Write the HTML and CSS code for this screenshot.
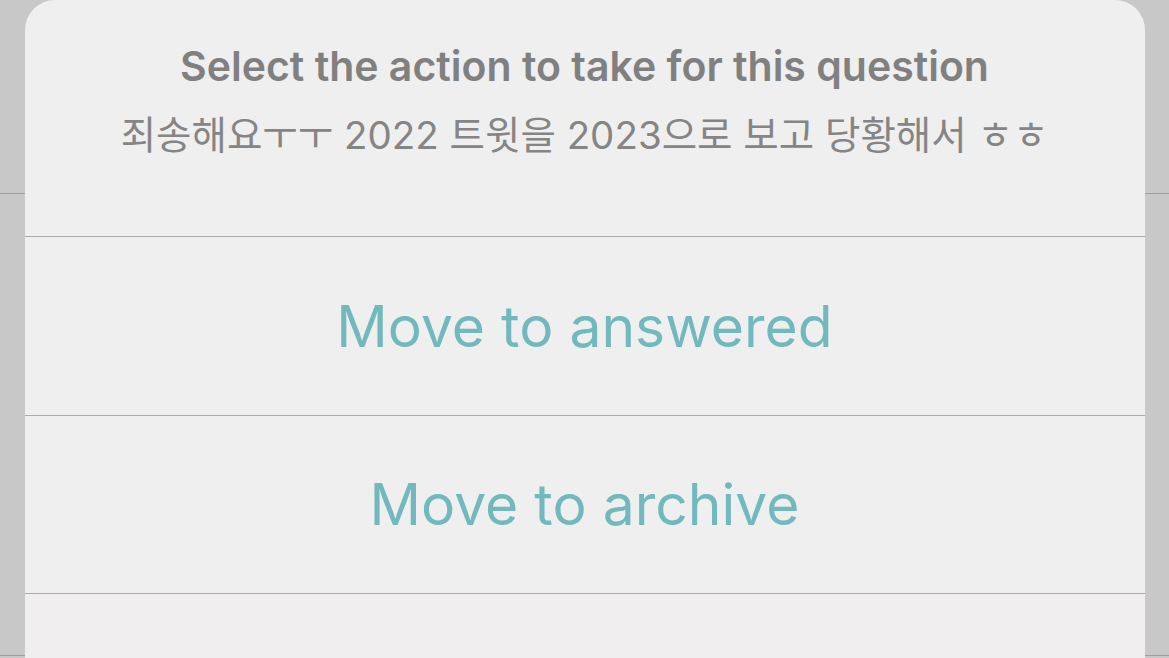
FILE: index.html
```html
<!DOCTYPE html>
<html lang="en">
<head>
<meta charset="utf-8">
<title>Action sheet</title>
<link rel="stylesheet" href="styles.css">
</head>
<body>
<div class="backdrop">
  <div class="bg-line top"></div>
  <div class="bg-line bottom"></div>
  <div class="sheet">
    <div class="header">
      <div class="title">Select the action to take for this question</div>
      <div class="message">죄송해요ㅜㅜ 2022 트윗을 2023으로 보고 당황해서 ㅎㅎ</div>
    </div>
    <div class="action first">Move to answered</div>
    <div class="action">Move to archive</div>
    <div class="action empty"></div>
  </div>
</div>
</body>
</html>
```
FILE: styles.css
```css
html, body {
  margin: 0;
  padding: 0;
  width: 1169px;
  height: 658px;
  overflow: hidden;
  background: #c8c8c8;
}
.backdrop {
  position: relative;
  width: 1169px;
  height: 658px;
  display: flex;
  justify-content: center;
  overflow: hidden;
}
.bg-line {
  position: absolute;
  left: 0;
  right: 0;
  height: 1px;
  background: #9e9e9e;
}
.bg-line.top { top: 193px; }
.bg-line.bottom { top: 655px; }
.sheet {
  position: relative;
  z-index: 1;
  width: 1120px;
  height: 658px;
  overflow: hidden;
  background: #efeff0;
  border-radius: 30px 30px 0 0;
  display: flex;
  flex-direction: column;
  font-family: Inter, "Noto Sans CJK KR", sans-serif;
}
.header {
  flex: 0 0 237px;
  box-sizing: border-box;
  padding-top: 42px;
  display: flex;
  flex-direction: column;
  align-items: center;
  border-bottom: 1px solid #acacac;
}
.title {
  font-size: 41px;
  font-weight: 600;
  color: #808080;
  line-height: 48px;
}
.message {
  margin-top: 21px;
  font-size: 38.5px;
  color: #858585;
  line-height: 48px;
}
.action {
  flex: 0 0 178px;
  box-sizing: border-box;
  display: flex;
  align-items: center;
  justify-content: center;
  border-bottom: 1px solid #acacac;
  font-size: 57px;
  color: #72b9bd;
}
.action.first {
  flex-basis: 179px;
}
.action.empty {
  border-bottom: none;
  background: #f0eeee;
}
```
